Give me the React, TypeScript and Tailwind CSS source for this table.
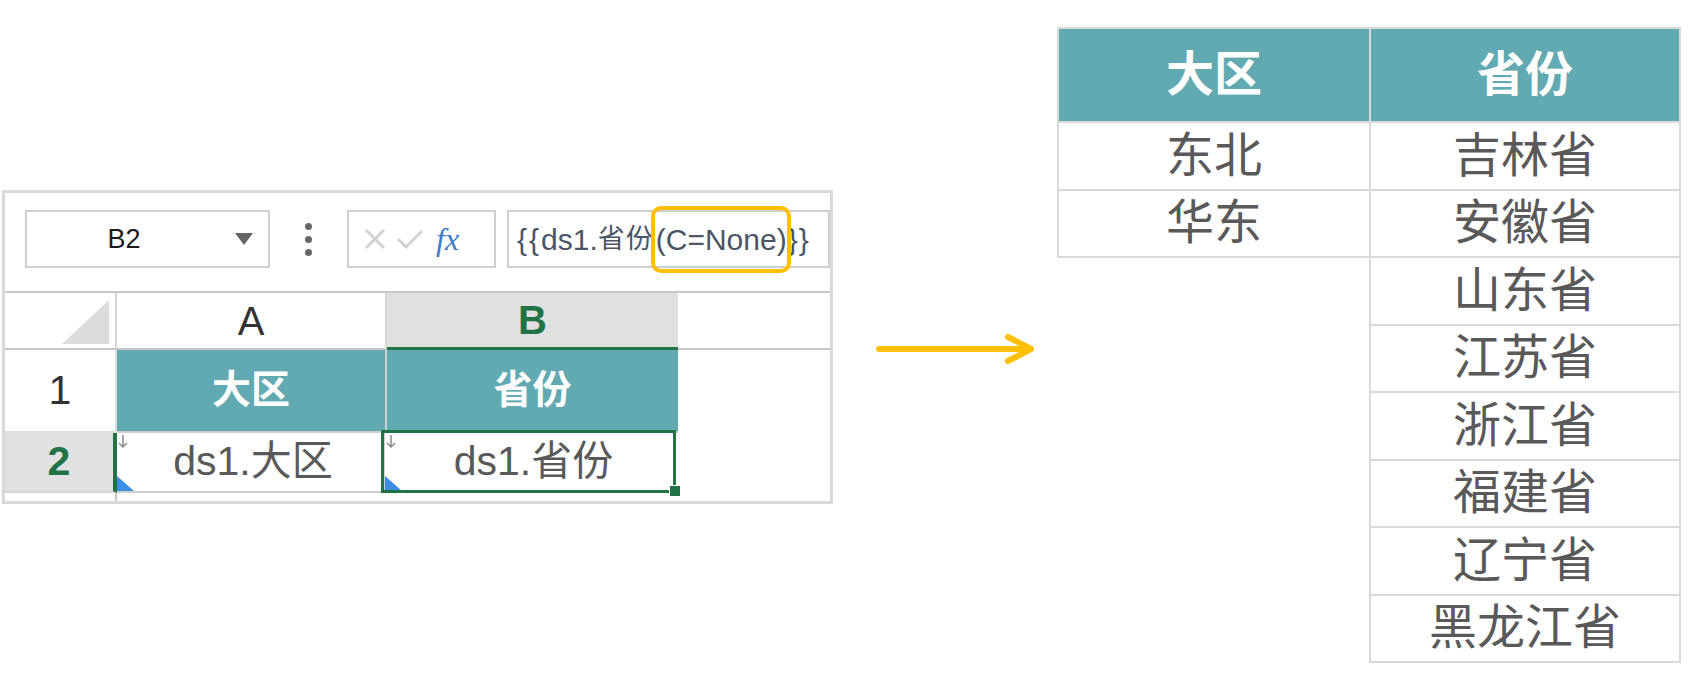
import React from 'react';

const CJK = "font-['Liberation_Sans','Noto_Sans_CJK_SC',sans-serif]";

const ProvinceColumn: React.FC<{ header: string; rows: string[]; first?: boolean }> = ({ header, rows, first }) => (
  <div
    className={`flex flex-col w-[312px] border-t-2 border-[#d9d9d9] ${
      first ? 'border-l-2' : 'border-l-2 border-r-2'
    }`}
  >
    <div className="h-[94px] flex items-center justify-center bg-[#62aab1] border-b-2 border-[#d9d9d9] text-white font-bold text-[48px]">
      {header}
    </div>
    {rows.map((r) => (
      <div
        key={r}
        className="h-[67.5px] flex items-center justify-center border-b-2 border-[#d9d9d9] text-[#595959] text-[48px] leading-none"
      >
        {r}
      </div>
    ))}
  </div>
);

const CellMarks: React.FC = () => (
  <>
    {/* fill-down arrow */}
    <svg className="absolute left-[1px] top-[1px]" width="10" height="15" viewBox="0 0 10 15">
      <path d="M5 1 L5 13 M1 9 L5 13 L9 9" stroke="#8a8a8a" strokeWidth="1.5" fill="none" />
    </svg>
    {/* blue corner triangle */}
    <svg className="absolute left-0 bottom-0" width="17" height="15" viewBox="0 0 17 15">
      <polygon points="0,0 17,15 0,15" fill="#3a8ee6" />
    </svg>
  </>
);

export default function App() {
  return (
    <div className={`w-[1700px] h-[698px] bg-white flex items-start ${CJK}`}>
      {/* Spreadsheet panel */}
      <div className="ml-[2px] mt-[190px] w-[831px] h-[314px] border-[3px] border-[#d9d9d9] bg-white flex flex-col overflow-hidden">
        {/* Toolbar */}
        <div className="h-[98px] flex items-start pl-[20px] pt-[17px]">
          <div className="w-[245px] h-[58px] border-2 border-[#cfcfcf] flex items-center">
            <span className="w-[194px] text-center text-[27px] text-[#1a1a1a]">B2</span>
            <svg className="ml-[14px]" width="18" height="12" viewBox="0 0 18 12">
              <polygon points="0,0 18,0 9,12" fill="#666" />
            </svg>
          </div>
          <div className="w-[77px] h-[58px] flex flex-col items-center justify-center gap-[6px]">
            <span className="w-[7px] h-[7px] rounded-full bg-[#666]" />
            <span className="w-[7px] h-[7px] rounded-full bg-[#666]" />
            <span className="w-[7px] h-[7px] rounded-full bg-[#666]" />
          </div>
          <div className="w-[149px] h-[58px] border-2 border-[#cfcfcf] flex items-center pl-[15px] gap-[10px]">
            <svg width="22" height="22" viewBox="0 0 22 22">
              <path d="M2 2 L20 20 M20 2 L2 20" stroke="#d2d2d2" strokeWidth="3" fill="none" />
            </svg>
            <svg width="28" height="22" viewBox="0 0 28 22">
              <path d="M2 11 L10 19 L26 3" stroke="#d2d2d2" strokeWidth="3" fill="none" />
            </svg>
            <span className="ml-[2px] italic text-[32px] leading-none text-[#3a7cc6] font-['Liberation_Serif',serif]">
              fx
            </span>
          </div>
          <div className="ml-[11px] w-[323px] h-[58px] border-2 border-[#cfcfcf] flex items-center pl-[8px] whitespace-nowrap text-[30px] text-[#4a5566]">
            <span className="tracking-[2px]">{'{{'}</span>
            <span>ds1.</span>
            <span className="text-[27px] tracking-[1px]">省份</span>
            <span className="relative ml-[2px]">
              (C=None)
              <span className="absolute -left-[5px] -right-[4px] top-[-11px] bottom-[-11px] border-[4px] border-[#ffc000] rounded-[10px]" />
            </span>
            <span className="ml-[1px] tracking-[1px]">{'}}'}</span>
          </div>
        </div>

        {/* Grid */}
        <div className="flex-1 flex flex-col border-t-2 border-[#c8c8c8]">
          {/* Column headers */}
          <div className="h-[57px] flex text-[40px]">
            <div className="w-[112px] border-b-2 border-r-2 border-[#d6d6d6] border-b-[#c6c6c6] flex items-end justify-end pr-[6px] pb-[4px]">
              <svg width="47" height="44" viewBox="0 0 47 44">
                <polygon points="47,0 47,44 0,44" fill="#dcdcdc" />
              </svg>
            </div>
            <div className="w-[270px] border-b-2 border-r-2 border-[#d6d6d6] border-b-[#c6c6c6] flex items-center justify-center text-[#333]">
              A
            </div>
            <div className="w-[291px] bg-[#e0e0e0] border-b-[3px] border-[#217346] flex items-center justify-center text-[#217346] font-bold">
              B
            </div>
            <div className="flex-1 border-b-2 border-[#c6c6c6]" />
          </div>

          {/* Row 1 */}
          <div className="h-[83px] flex">
            <div className="w-[112px] border-b-2 border-r-2 border-[#dedede] flex items-center justify-center text-[41px] text-[#333]">
              1
            </div>
            <div className="w-[270px] bg-[#62aab1] border-b-2 border-r-2 border-[#cfcfcf] flex items-center justify-center text-white font-bold text-[39px]">
              大区
            </div>
            <div className="w-[291px] bg-[#62aab1] border-b-2 border-[#cfcfcf] flex items-center justify-center text-white font-bold text-[39px]">
              省份
            </div>
          </div>

          {/* Row 2 */}
          <div className="h-[60px] flex">
            <div className="w-[112px] bg-[#e1e1e1] border-r-[4px] border-[#217346] border-b-2 border-b-[#d6d6d6] flex items-center justify-center text-[41px] text-[#217346] font-bold">
              2
            </div>
            <div className="relative w-[268px] border-b-2 border-r-2 border-[#d0d0d0] flex items-center justify-center pl-[6px] text-[41px] text-[#595959]">
              <CellMarks />
              ds1.大区
            </div>
            <div className="relative w-[291px] border-b-2 border-[#d0d0d0] flex items-center justify-center pl-[6px] text-[41px] text-[#595959]">
              <CellMarks />
              ds1.省份
              <span className="absolute -left-[4px] right-[0px] -top-[3px] -bottom-[2px] border-[3px] border-[#217346]" />
              <span className="absolute -right-[5px] -bottom-[6px] w-[12px] h-[12px] bg-[#217346] border border-white" />
            </div>
          </div>

          {/* Partial row 3 */}
          <div className="flex-1 flex">
            <div className="w-[112px] border-r-2 border-[#c8c8c8]" />
          </div>
        </div>
      </div>

      {/* Arrow */}
      <svg className="ml-[43px] mt-[333px]" width="160" height="32" viewBox="0 0 160 32">
        <path d="M3 16 L153 16" stroke="#ffc000" strokeWidth="6" strokeLinecap="round" fill="none" />
        <path d="M132 4 L155 16 L132 28" stroke="#ffc000" strokeWidth="6" strokeLinecap="round" strokeLinejoin="round" fill="none" />
      </svg>

      {/* Result table */}
      <div className="ml-[21px] mt-[27px] flex items-start">
        <ProvinceColumn header="大区" rows={['东北', '华东']} first />
        <ProvinceColumn
          header="省份"
          rows={['吉林省', '安徽省', '山东省', '江苏省', '浙江省', '福建省', '辽宁省', '黑龙江省']}
        />
      </div>
    </div>
  );
}
